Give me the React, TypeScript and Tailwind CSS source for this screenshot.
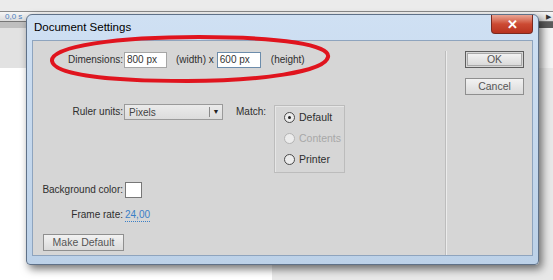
import React from "react";

const label = "text-[10px] leading-[16px] text-[#2e2e2e] whitespace-nowrap";

function Radio({ text, checked, disabled }: { text: string; checked?: boolean; disabled?: boolean }) {
  return (
    <div className="flex items-center gap-[4px] h-[21px]">
      <span
        className={`w-[11px] h-[11px] rounded-full border flex items-center justify-center bg-[#ececec] ${
          disabled ? "border-[#b4b4b4]" : "border-[#4a4a4a]"
        }`}
      >
        {checked && <span className="w-[3px] h-[3px] rounded-full bg-[#222]" />}
      </span>
      <span className={`text-[10.5px] ${disabled ? "text-[#a8a8a8]" : "text-[#2e2e2e]"}`}>{text}</span>
    </div>
  );
}

function Button({ text, primary, width }: { text: string; primary?: boolean; width: string }) {
  return (
    <div className={`${width} h-[17px] ${primary ? "border border-[#5e5e5e] p-px" : ""}`}>
      <div
        className={`h-full flex items-center justify-center bg-gradient-to-b from-[#f2f2f2] to-[#dadada] text-[10.5px] text-[#555] ${
          primary ? "border border-[#a9a9a9]" : "border border-[#8f8f8f]"
        }`}
      >
        {text}
      </div>
    </div>
  );
}

export default function App() {
  return (
    <div
      className="relative w-[553px] h-[280px] overflow-hidden bg-white"
      style={{ fontFamily: '"Liberation Sans", Arial, sans-serif' }}
    >
      {/* Desktop behind the dialog */}
      <div className="flex flex-col h-full">
        <div className="h-[11px] bg-[#ebebeb]" />
        <div className="h-[10px] border-t border-[#8a8a8a] bg-gradient-to-b from-[#f6f6f6] to-[#dcdcdc] flex items-center justify-between pl-[5px] pr-[2px]">
          <span className="text-[8px] leading-none text-[#4a7fbf]">0,0 s</span>
          <span className="text-[7px] leading-none text-[#333]">▶</span>
        </div>
        <div className="h-[7px] bg-[#bfbfbf] border-t border-[#777] flex justify-end">
          <div className="w-[14px] bg-[#5c5c5c]" />
        </div>
        <div className="h-[40px] bg-[#e2e2e2] flex justify-end">
          <div className="w-[14px] bg-[#f4f4f4]" />
        </div>
        <div className="flex-1 flex">
          <div className="w-[272px] bg-white" />
          <div className="flex-1 bg-[#e8e8e8]" />
        </div>
      </div>

      {/* Dialog window */}
      <div className="absolute left-[26px] top-[14px] w-[513px] h-[251px] rounded-t-[6px] rounded-b-[4px] border border-[#5f7188] bg-gradient-to-b from-[#cfe0f3] to-[#bcd1e8] shadow-[3px_4px_8px_rgba(0,0,0,0.55)] flex flex-col px-[5px] pb-[8px]">
        {/* Title bar */}
        <div className="h-[25px] flex items-center justify-between pl-[2px]">
          <span className="text-[11.5px] text-black">Document Settings</span>
          <div className="self-start w-[42px] h-[19px] rounded-b-[4px] border border-[#7a2a20] border-t-0 bg-gradient-to-b from-[#e9a594] via-[#cc4a33] to-[#b8321f] flex items-center justify-center">
            <span className="text-white text-[13px] font-bold leading-none">✕</span>
          </div>
        </div>

        {/* Client area */}
        <div className="relative flex-1 flex border border-[#8ea4be] bg-[#d6d6d6]">
          {/* Left pane */}
          <div className="w-[412px] flex flex-col pl-[8px] pt-[11px]">
            {/* Dimensions */}
            <div className="flex items-center h-[16px]">
              <span className={`${label} w-[82px] text-right`}>Dimensions:</span>
              <div className="ml-px w-[43px] h-[16px] border border-[#a6a6a6] bg-white px-[2px] text-[10px] leading-[14px] text-[#333]">
                800 px
              </div>
              <span className={`${label} ml-[9px]`}>(width) x</span>
              <div className="ml-[3px] w-[44px] h-[16px] border border-[#6c8cab] bg-white px-[2px] text-[10px] leading-[14px] text-[#333]">
                600 px
              </div>
              <span className={`${label} ml-[10px]`}>(height)</span>
            </div>

            {/* Ruler units + Match */}
            <div className="flex items-start mt-[36px]">
              <span className={`${label} w-[82px] text-right`}>Ruler units:</span>
              <div className="ml-px w-[99px] h-[16px] border border-[#9a9a9a] bg-gradient-to-b from-[#ebebeb] to-[#dcdcdc] flex items-center">
                <span className="flex-1 pl-[4px] text-[10px] text-[#444]">Pixels</span>
                <span className="w-px h-[10px] bg-[#8a8a8a]" />
                <span className="w-[12px] text-center text-[7px] text-[#222]">▼</span>
              </div>
              <span className={`${label} ml-[13px]`}>Match:</span>
              <div className="ml-[8px] mt-px w-[71px] h-[68px] border border-[#bcbcbc] shadow-[inset_1px_1px_0_#e6e6e6] flex flex-col pl-[9px] pt-[1px]">
                <Radio text="Default" checked />
                <Radio text="Contents" disabled />
                <Radio text="Printer" />
              </div>
            </div>

            {/* Background color */}
            <div className="flex items-center mt-[9px] h-[16px]">
              <span className={`${label} w-[82px] text-right`}>Background color:</span>
              <div className="ml-[2px] w-[17px] h-[16px] border border-[#777] bg-white" />
            </div>

            {/* Frame rate */}
            <div className="flex items-center mt-[9px] h-[16px]">
              <span className={`${label} w-[82px] text-right`}>Frame rate:</span>
              <span className="ml-[2px] text-[10px] text-[#3b7fc6] border-b border-dotted border-[#3b7fc6] leading-[12px]">
                24,00
              </span>
            </div>

            {/* Make Default */}
            <div className="mt-[11px] pl-[2px]">
              <Button text="Make Default" width="w-[81px]" />
            </div>
          </div>

          {/* Separator */}
          <div className="mt-[10px] w-[2px] flex">
            <div className="w-px bg-[#bdbdbd]" />
            <div className="w-px bg-[#ececec]" />
          </div>

          {/* Right pane */}
          <div className="flex-1 flex flex-col items-start pl-[18px] pt-[10px] gap-[10px]">
            <Button text="OK" primary width="w-[59px]" />
            <Button text="Cancel" width="w-[59px]" />
          </div>

          {/* Red annotation ellipse */}
          <svg
            className="absolute left-[14px] top-[-8px] pointer-events-none"
            width="284"
            height="54"
            viewBox="0 0 284 54"
          >
            <path
              d="M5 28 C 3 13, 72 4, 152 4 C 234 4, 284 12, 281 24 C 278 39, 212 48, 140 48 C 58 48, 7 41, 5 28 Z"
              fill="none"
              stroke="#e0141e"
              strokeWidth="4"
            />
          </svg>
        </div>
      </div>
    </div>
  );
}
